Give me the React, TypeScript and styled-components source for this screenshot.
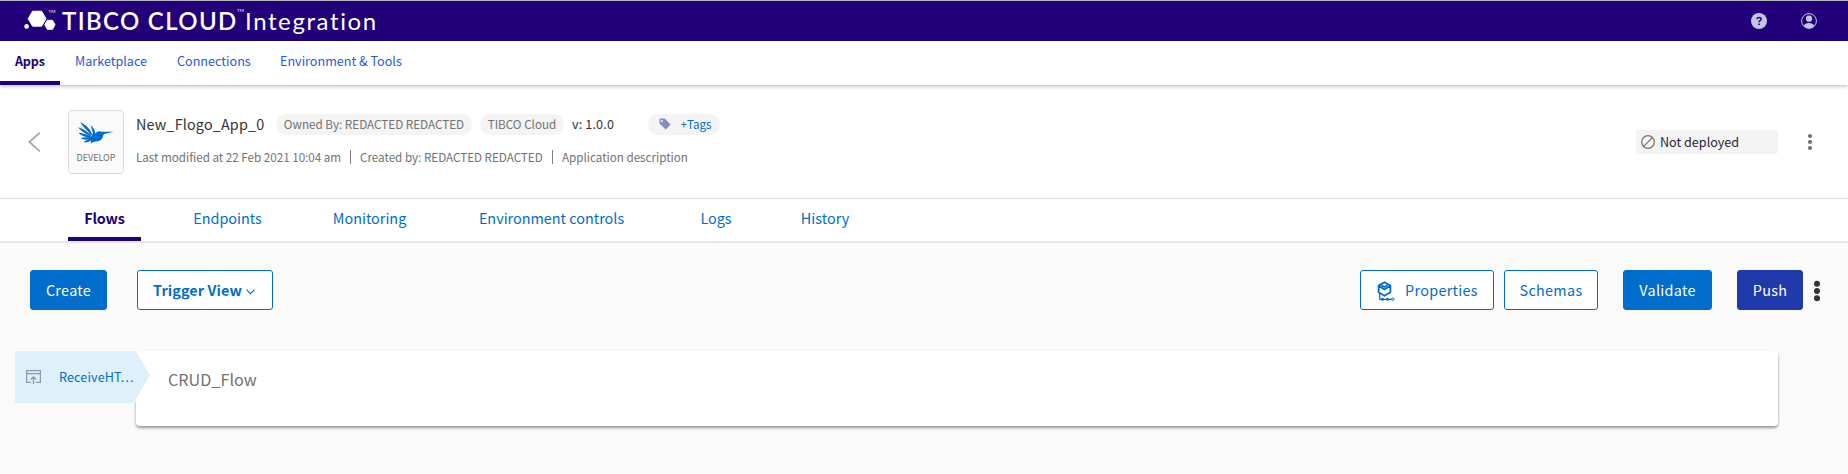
import React from "react";
import styled, { createGlobalStyle, css } from "styled-components";

const blue = "#006dcc";
const indigo = "#220079";

const Global = createGlobalStyle`
  * { box-sizing: border-box; }
  html, body { margin: 0; background: #fafafa; }
  body {
    font-family: "Noto Sans CJK SC", "Noto Sans", sans-serif;
    color: #333;
    overflow: hidden;
  }
`;

const Page = styled.div`
  width: 1848px;
  height: 474px;
  display: flex;
  flex-direction: column;
`;

const TopBar = styled.header`
  height: 41px;
  flex: none;
  display: flex;
  align-items: center;
  border-top: 1px solid #b4b4bd;
  background: ${indigo};
  color: #fff;
  padding: 0 31px 0 24px;
`;

const Brand = styled.div`
  display: flex;
  align-items: center;
  gap: 5px;
  font-family: Lato, sans-serif;
  font-size: 24px;
  line-height: 30px;
  white-space: nowrap;
`;

const BrandName = styled.span`
  width: 174px;
  margin-left: 1px;
  font-weight: 600;
  letter-spacing: 1.35px;
`;

const BrandMark = styled.sup`
  align-self: flex-start;
  width: 4px;
  margin: -1px 0 0 -4px;
  font-size: 4.5px;
  line-height: 12px;
`;

const BrandProduct = styled.span`
  margin-left: -1px;
  font-weight: 400;
  letter-spacing: 1.6px;
`;

const TopActions = styled.div`
  display: flex;
  gap: 34px;
  margin-left: auto;
`;

const Nav = styled.nav`
  position: relative;
  height: 44px;
  flex: none;
  display: flex;
  background: #fff;
  box-shadow: 0 1px 4px rgba(0, 0, 0, 0.3);
`;

const NavItem = styled.a<{ $w: number; $active?: boolean }>`
  width: ${(p) => p.$w}px;
  padding-left: 15px;
  font-size: 12.6px;
  line-height: 40px;
  color: #1f5adc;
  white-space: nowrap;
  ${(p) =>
    p.$active &&
    css`
      border-bottom: 4px solid ${indigo};
      color: ${indigo};
      font-weight: 700;
      letter-spacing: -0.2px;
    `}
`;

const AppHeader = styled.section`
  height: 114px;
  flex: none;
  display: flex;
  align-items: flex-start;
  padding: 25px 35px 0 28px;
  background: #fff;
  border-bottom: 1px solid #dcdcdc;
`;

const Back = styled.svg`
  margin: 22px 27px 0 0;
`;

const AppBadge = styled.div`
  width: 56px;
  height: 64px;
  display: flex;
  flex-direction: column;
  align-items: center;
  padding-top: 11px;
  border: 1px solid #d9d9d9;
  border-radius: 4px;
  background: #fafafa;
  color: #727272;
  font-size: 9px;
  line-height: 12px;

  span { margin-top: 8px; }
`;

const Details = styled.div`
  margin-left: 12px;
  white-space: nowrap;
`;

const TitleRow = styled.div`
  display: flex;
  align-items: center;
  height: 28px;
`;

const AppName = styled.h1`
  width: 140px;
  margin: 0;
  font-size: 14.4px;
  font-weight: 400;
  line-height: 20px;
  letter-spacing: 0.15px;
`;

const Chip = styled.span<{ $w: number }>`
  width: ${(p) => p.$w}px;
  height: 21px;
  display: flex;
  align-items: center;
  justify-content: center;
  margin-right: 8px;
  padding-bottom: 2px;
  border-radius: 11px;
  background: #f4f4f4;
  color: #727272;
  font-size: 11.7px;
  line-height: 19px;
`;

const TagChip = styled(Chip)`
  gap: 9px;
  padding-left: 3px;
  color: ${blue};

  svg { margin-top: 2px; }
`;

const Version = styled.span`
  width: 76px;
  font-size: 12.6px;
  line-height: 20px;
  letter-spacing: 0.15px;
`;

const MetaRow = styled.div`
  display: flex;
  height: 20px;
  margin-top: 8px;
  color: #727272;
  font-size: 11.7px;
  line-height: 22px;
  letter-spacing: -0.03px;
`;

const Divider = styled.span`
  width: 1px;
  height: 14px;
  margin: 4px 9px 0 0;
  background: #8a7f7a;
`;

const Meta = styled.span<{ $w: number }>`
  width: ${(p) => p.$w}px;
`;

const Status = styled.div`
  width: 142px;
  height: 24px;
  display: flex;
  align-items: center;
  gap: 5px;
  margin: 20px 29px 0 auto;
  padding-left: 5px;
  border-radius: 3px;
  background: #f4f4f4;
  color: #2b2340;
  font-size: 12.6px;
  line-height: 24px;
`;

const HeaderMenu = styled.svg`
  margin-top: 22px;
`;

const Tabs = styled.nav`
  height: 44px;
  flex: none;
  display: flex;
  padding-left: 68px;
  background: #fff;
  border-bottom: 2px solid #e8e8e8;
`;

const Tab = styled.a<{ $gap: number; $w: number; $active?: boolean }>`
  width: ${(p) => p.$w}px;
  margin-right: ${(p) => p.$gap}px;
  height: 42px;
  color: ${blue};
  font-size: 14.4px;
  line-height: 38px;
  text-align: center;
  white-space: nowrap;
  ${(p) =>
    p.$active &&
    css`
      border-bottom: 4px solid ${indigo};
      color: ${indigo};
      font-weight: 700;
      letter-spacing: -0.2px;
    `}
`;

const Toolbar = styled.div`
  display: flex;
  padding: 27px 28px 0 30px;
`;

const Button = styled.button<{ $w: number; $gap?: number; $kind?: "primary" | "push" }>`
  width: ${(p) => p.$w}px;
  height: 40px;
  display: flex;
  align-items: center;
  justify-content: center;
  margin: 0 ${(p) => p.$gap ?? 0}px 0 0;
  padding: 0;
  border: 1px solid ${blue};
  border-radius: 3px;
  background: #fff;
  color: ${blue};
  font: 400 14.4px/38px "Noto Sans CJK SC", sans-serif;
  letter-spacing: 0.3px;
  white-space: nowrap;
  ${(p) => p.$kind && css`
    color: #fff;
    background: ${p.$kind === "push" ? "#2039ab" : blue};
    border-color: ${p.$kind === "push" ? "#2039ab" : blue};
  `}
`;

const ViewButton = styled(Button)`
  gap: 4px;
  padding-right: 2px;
  font-weight: 700;
  letter-spacing: 0.1px;

  svg { margin-top: 4px; }
`;

const Spacer = styled.div`
  flex: 1;
`;

const FlowRow = styled.div`
  display: flex;
  margin: 41px 70px 0 15px;
`;

const Trigger = styled.div`
  position: relative;
  z-index: 1;
  width: 135px;
  height: 52px;
  margin-right: -14px;
  display: flex;
  align-items: center;
  gap: 18px;
  padding-left: 11px;
  background: #def0fa;
  clip-path: polygon(0 0, 121px 0, 135px 24px, 121px 48px, 121px 100%, 0 100%);
  color: ${blue};
  font-size: 12.6px;
  line-height: 20px;
  letter-spacing: 0.12px;
  white-space: nowrap;

  span { margin-top: -1px; }
`;

const FlowCard = styled.div`
  flex: 1;
  height: 75px;
  padding: 16px 32px;
  border-radius: 4px;
  background: #fff;
  box-shadow: 0 2px 3px rgba(0, 0, 0, 0.4);
  color: #727272;
  font-size: 16.2px;
  line-height: 24px;
`;

const PropertiesGlyph = styled.svg`
  margin: 2px 10px 0 1px;
`;

const Logo = () => (
  <svg width="32" height="24" viewBox="0 0 32 24" fill="#fff">
    <path d="M8.600 3h9L22 10.500 17.600 18h-9L4.200 10.500z" stroke="#fff" strokeLinejoin="round" transform="translate(0 -.8)" />
    <path d="M23.300 11.500h5.200l2.500 4.500-2.500 4.500h-5.200L20.800 16z" stroke="#fff" strokeLinejoin="round" transform="translate(0 -.2)" />
    <circle cx="2.600" cy="17.400" r="2.300" />
    <text x="24.500" y="4" fontSize="4.500" fontFamily="Lato, sans-serif">TM</text>
  </svg>
);

const HelpIcon = () => (
  <svg width="16" height="16" viewBox="0 0 16 16">
    <circle cx="8" cy="8" r="8" fill="#c5c5e2" />
    <path d="M6 6.200C6.100 4.900 7 4.400 8 4.400s2.100.6 2.100 1.700c0 1.500-2 1.500-2 3.100" fill="none" stroke={indigo} strokeWidth="1.500" />
    <path d="M7.300 10.400h1.600V12H7.300z" fill={indigo} />
  </svg>
);

const UserIcon = () => (
  <svg width="16" height="16" viewBox="0 0 16 16">
    <circle cx="8" cy="8" r="7.400" fill="none" stroke="#c5c5e2" />
    <circle cx="8" cy="5.700" r="3.100" fill="#c5c5e2" />
    <path d="M2.800 13c.8-2.200 2.600-3 5.200-3s4.400.8 5.200 3A7.400 7.400 0 0 1 8 15.400 7.400 7.400 0 0 1 2.800 13z" fill="#c5c5e2" />
  </svg>
);

const Bird = () => (
  <svg width="36" height="22" viewBox="0 0 108 66" fill={blue}>
    <path d="M7 0C20 7 35 17 43 38L38 40C30 24 14 16 7 0z" />
    <path d="M1 16C13 20 29 28 40 42L36 44C24 33 8 29 1 16z" />
    <path d="M2 32C14 33 28 37 40 45L36 48C24 43 10 43 2 32z" />
    <path d="M8 48C19 45 29 45 42 47L38 52C27 53 16 55 8 48z" />
    <path d="M17 61C24 54 33 51 44 49L42 55C34 58 26 63 17 61z" />
    <path d="M38 10C46 17 52 26 52 35 56 28 63 26 69 29 79 30 90 29 107 29 93 32 81 34 76 38 75 49 69 57 56 58L44 61 38 65 40 55 36 46 42 40 45 34z" />
  </svg>
);

const Dots = ({ step, r, color }: { step: number; r: number; color: string }) => (
  <>
    {[-1, 0, 1].map((n) => (
      <circle key={n} cx="3" cy={10 + n * step} r={r} fill={color} />
    ))}
  </>
);

const PropertiesIcon = () => (
  <PropertiesGlyph width="18" height="20" viewBox="0 0 18 20" fill="none" stroke={blue} strokeWidth="1.800">
    <path d="M7.500 1.200l5.900 3.400v6.700l-5.900 3.400-5.900-3.400V4.600zM1.600 4.800l5.900 3.600 5.900-3.600M4.500 4.200l3 1.800 3-1.800" />
    <path d="M2.600 12.500v6M2.600 18.300H15" strokeWidth="1.300" />
    <path d="M5.500 18.300h.01M10.500 18.300h.01" strokeWidth="3" strokeLinecap="round" />
    <circle cx="15.800" cy="18.200" r="1.200" fill="#fff" strokeWidth="1" />
  </PropertiesGlyph>
);

const TriggerIcon = () => (
  <svg width="15" height="14" viewBox="0 0 15 14" fill="none" stroke="#8b98b3" strokeWidth="1.300">
    <path d="M5 12.400H.6V.6h13.800v11.800H10M.6 3.600h13.800M7.500 14V7.500M4.800 9.500l2.700-2.700 2.700 2.700" />
  </svg>
);

const navItems: [string, number][] = [
  ["Apps", 60],
  ["Marketplace", 102],
  ["Connections", 103],
  ["Environment & Tools", 160],
];

const tabs: [string, number, number][] = [
  ["Flows", 73, 52],
  ["Endpoints", 69, 70],
  ["Monitoring", 75, 71],
  ["Environment controls", 147, 71],
  ["Logs", 40, 63],
  ["History", 52, 0],
];

export default function App() {
  return (
    <Page>
      <Global />
      <TopBar>
        <Brand>
          <Logo />
          <BrandName>TIBCO CLOUD</BrandName>
          <BrandMark>TM</BrandMark>
          <BrandProduct>Integration</BrandProduct>
        </Brand>
        <TopActions>
          <HelpIcon />
          <UserIcon />
        </TopActions>
      </TopBar>
      <Nav>
        {navItems.map(([label, w], i) => (
          <NavItem key={label} $w={w} $active={i === 0}>{label}</NavItem>
        ))}
      </Nav>
      <AppHeader>
        <Back width="13" height="20" viewBox="0 0 13 20" fill="none" stroke="#a6a6a6" strokeWidth="1.700">
          <path d="M11.800.6L1.400 10l10.400 9.400" />
        </Back>
        <AppBadge>
          <Bird />
          <span>DEVELOP</span>
        </AppBadge>
        <Details>
          <TitleRow>
            <AppName>New_Flogo_App_0</AppName>
            <Chip $w={196}>Owned By: REDACTED REDACTED</Chip>
            <Chip $w={84}>TIBCO Cloud</Chip>
            <Version>v: 1.0.0</Version>
            <TagChip $w={72}>
              <svg width="12" height="12" viewBox="0 0 12 12" fill="#838dc4">
                <path fillRule="evenodd" d="M1 .5h4.700l5.900 5.900-4.800 5L.5 5.500V1zM2.800 1.900a1 1 0 1 0 .01 0z" />
              </svg>
              +Tags
            </TagChip>
          </TitleRow>
          <MetaRow>
            <Meta $w={214}>Last modified at 22 Feb 2021 10:04 am</Meta>
            <Divider />
            <Meta $w={192}>Created by: REDACTED REDACTED</Meta>
            <Divider />
            <Meta $w={150}>Application description</Meta>
          </MetaRow>
        </Details>
        <Status>
          <svg width="14" height="14" viewBox="0 0 14 14" fill="none" stroke="#727272" strokeWidth="1.200">
            <circle cx="7" cy="7" r="6.300" />
            <path d="M2.600 11.400l8.800-8.800" />
          </svg>
          Not deployed
        </Status>
        <HeaderMenu width="6" height="20" viewBox="0 0 6 20"><Dots step={6} r={2.1} color="#727272" /></HeaderMenu>
      </AppHeader>
      <Tabs>
        {tabs.map(([label, w, gap], i) => (
          <Tab key={label} $w={w} $gap={gap} $active={i === 0}>{label}</Tab>
        ))}
      </Tabs>
      <Toolbar>
        <Button $w={77} $gap={30} $kind="primary">Create</Button>
        <ViewButton $w={136}>
          Trigger View
          <svg width="9" height="6" viewBox="0 0 9 6" fill="none" stroke={blue} strokeWidth="1.100">
            <path d="M.5.7l4 4 4-4" />
          </svg>
        </ViewButton>
        <Spacer />
        <Button $w={134} $gap={10}><PropertiesIcon />Properties</Button>
        <Button $w={94} $gap={25}>Schemas</Button>
        <Button $w={89} $gap={25} $kind="primary">Validate</Button>
        <Button $w={66} $gap={11} $kind="push">Push</Button>
        <svg width="6" height="40" viewBox="0 -11 6 40"><Dots step={7.3} r={3} color="#333" /></svg>
      </Toolbar>
      <FlowRow>
        <Trigger><TriggerIcon /><span>ReceiveHT…</span></Trigger>
        <FlowCard>CRUD_Flow</FlowCard>
      </FlowRow>
    </Page>
  );
}
